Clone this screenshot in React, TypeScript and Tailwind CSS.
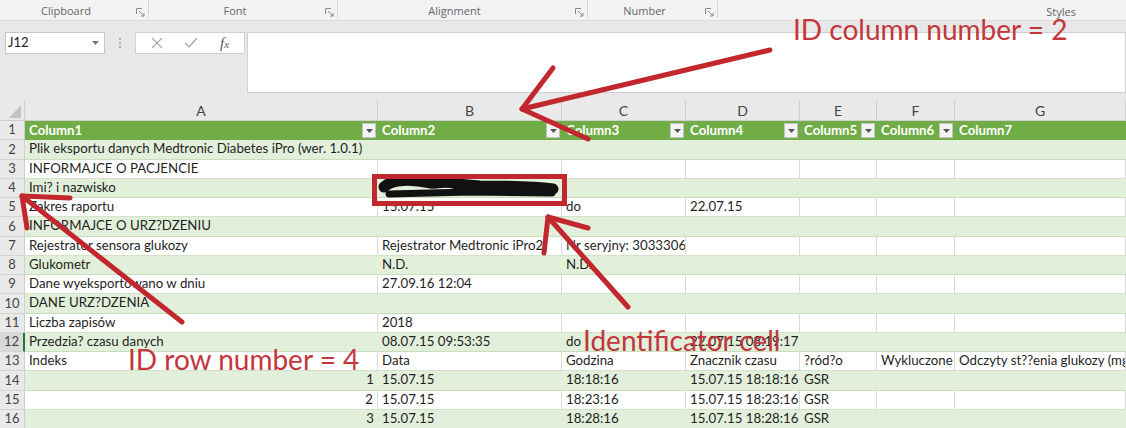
import React from "react";

const COLS = [
  { letter: "A", w: "w-[353px]" },
  { letter: "B", w: "w-[184px]" },
  { letter: "C", w: "w-[124px]" },
  { letter: "D", w: "w-[114px]" },
  { letter: "E", w: "w-[77px]" },
  { letter: "F", w: "w-[78px]" },
  { letter: "G", w: "flex-1" },
];

const GROUPS = [
  { label: "Clipboard", w: "w-[149px]" },
  { label: "Font", w: "w-[189px]" },
  { label: "Alignment", w: "w-[250px]" },
  { label: "Number", w: "w-[130px]" },
];

// row 2..16, seven columns
const DATA: string[][] = [
  ["Plik eksportu danych Medtronic Diabetes iPro (wer. 1.0.1)", "", "", "", "", "", ""],
  ["INFORMAJCE O PACJENCIE", "", "", "", "", "", ""],
  ["Imi? i nazwisko", "", "", "", "", "", ""],
  ["Zakres raportu", "15.07.15", "do", "22.07.15", "", "", ""],
  ["INFORMAJCE O URZ?DZENIU", "", "", "", "", "", ""],
  ["Rejestrator sensora glukozy", "Rejestrator Medtronic iPro2", "Nr seryjny: 3033306", "", "", "", ""],
  ["Glukometr", "N.D.", "N.D.", "", "", "", ""],
  ["Dane wyeksportowano w dniu", "27.09.16 12:04", "", "", "", "", ""],
  ["DANE URZ?DZENIA", "", "", "", "", "", ""],
  ["Liczba zapisów", "2018", "", "", "", "", ""],
  ["Przedzia? czasu danych", "08.07.15 09:53:35", "do", "22.07.15 08:19:17", "", "", ""],
  ["Indeks", "Data", "Godzina", "Znacznik czasu", "?ród?o", "Wykluczone", "Odczyty st??enia glukozy (mg/dL)"],
  ["1", "15.07.15", "18:18:16", "15.07.15 18:18:16", "GSR", "", ""],
  ["2", "15.07.15", "18:23:16", "15.07.15 18:23:16", "GSR", "", ""],
  ["3", "15.07.15", "18:28:16", "15.07.15 18:28:16", "GSR", "", ""],
];

function Launcher() {
  return (
    <svg width="9" height="9" viewBox="0 0 9 9" fill="none" stroke="#8a8a8a" strokeWidth="1">
      <path d="M0.5 6V0.5H6" />
      <path d="M3 3L8 8M8 5V8H5" />
    </svg>
  );
}

function FilterButton() {
  return (
    <div className="w-[14px] h-[15px] bg-[#f4f4f4] border border-[#c4c4c4] flex items-center justify-center">
      <svg width="7" height="4" viewBox="0 0 7 4">
        <path d="M0 0H7L3.5 4Z" fill="#555" />
      </svg>
    </div>
  );
}

export default function App() {
  return (
    <div className="relative w-[1126px] h-[428px] overflow-hidden bg-white font-['Lato',sans-serif]">
      {/* ribbon group labels */}
      <div className="h-[20px] flex bg-[#f3f3f3] font-['Open_Sans',sans-serif] text-[11px] text-[#666]">
        {GROUPS.map((g) => (
          <div key={g.label} className={`${g.w} flex items-center border-r border-[#d8d8d8] mb-[2px] pt-[4px]`}>
            <div className="flex-1 text-center">{g.label}</div>
            <div className="w-[16px] flex justify-center pt-[2px]">
              <Launcher />
            </div>
          </div>
        ))}
        <div className="flex-1 flex items-center justify-end pr-[50px] pt-[4px]">Styles</div>
      </div>

      {/* formula bar */}
      <div className="h-[80px] bg-[#e8e8e8] border-t border-[#dcdcdc] flex items-start pt-[11px] pl-[5px]">
        <div className="w-[100px] h-[22px] bg-white border border-[#c6c6c6] flex items-center justify-between pl-[2px] pr-[5px] text-[13px] text-[#222]">
          <span>J12</span>
          <svg width="7" height="4" viewBox="0 0 7 4">
            <path d="M0 0H7L3.5 4Z" fill="#777" />
          </svg>
        </div>
        <div className="w-[30px] h-[22px] flex flex-col items-center justify-center gap-[2px]">
          <div className="w-[2px] h-[2px] bg-[#b0b0b0]" />
          <div className="w-[2px] h-[2px] bg-[#b0b0b0]" />
          <div className="w-[2px] h-[2px] bg-[#b0b0b0]" />
        </div>
        <div className="w-[110px] h-[22px] bg-white border border-[#d0d0d0] flex items-center justify-around px-[4px]">
          <svg width="12" height="12" viewBox="0 0 12 12" stroke="#aaa" strokeWidth="1.2">
            <path d="M1 1L11 11M11 1L1 11" />
          </svg>
          <svg width="14" height="12" viewBox="0 0 14 12" fill="none" stroke="#aaa" strokeWidth="1.4">
            <path d="M1 6L5 10L13 1" />
          </svg>
          <span className="font-['Liberation_Serif',serif] italic text-[15px] text-[#555] leading-none">
            f<span className="text-[11px]">x</span>
          </span>
        </div>
        <div className="ml-[2px] flex-1 h-[61px] bg-white border border-[#d0d0d0]" />
      </div>

      {/* column headers */}
      <div className="h-[21px] flex bg-[#e9e9e9] border-b border-[#cfcfcf] text-[14px] text-[#444]">
        <div className="w-[25px] border-r border-[#cfcfcf] flex items-end justify-end pr-[3px] pb-[2px]">
          <svg width="12" height="13" viewBox="0 0 12 13">
            <path d="M12 0V13H0Z" fill="#c3c3c3" />
          </svg>
        </div>
        {COLS.map((c) => (
          <div key={c.letter} className={`${c.w} border-r border-[#cfcfcf] flex items-center justify-center`}>
            {c.letter}
          </div>
        ))}
      </div>

      {/* table header row 1 */}
      <div className="h-[19.25px] flex text-[13.25px]">
        <div className="w-[25px] bg-[#e9e9e9] border-r border-b border-[#cfcfcf] flex items-center justify-center text-[#444] text-[13px]">
          1
        </div>
        {COLS.map((c, i) => (
          <div
            key={c.letter}
            className={`${c.w} bg-[#70ad47] flex items-center justify-between pl-[4px] pr-[2px] font-bold text-white`}
          >
            <span>Column{i + 1}</span>
            {i < 6 && <FilterButton />}
          </div>
        ))}
      </div>

      {/* data rows */}
      {DATA.map((row, r) => {
        const n = r + 2;
        const band = n % 2 === 0;
        return (
          <div key={n} className="h-[19.25px] flex text-[13.25px] text-[#1f1f1f]">
            <div
              className={`w-[25px] border-b border-[#d4d4d4] flex items-center justify-center text-[#444] text-[13px] ${
                n === 12 ? "bg-[#d9d9d9] border-r-2 border-r-[#217346]" : "bg-[#e9e9e9] border-r border-r-[#cfcfcf]"
              }`}
            >
              {n}
            </div>
            {COLS.map((c, i) => (
              <div
                key={c.letter}
                className={`${c.w} flex items-center px-[4px] whitespace-nowrap overflow-hidden border-b ${
                  band ? "bg-[#e2efda] border-[#c9dfbb]" : "bg-white border-[#d3e3c8] border-r border-r-[#dadada]"
                } ${i === 0 && n >= 14 ? "justify-end" : ""}`}
              >
                {row[i]}
              </div>
            ))}
          </div>
        );
      })}

      {/* annotations */}
      <svg
        className="absolute inset-0 pointer-events-none"
        width="1126"
        height="428"
        viewBox="0 0 1126 428"
        fill="none"
        strokeLinecap="round"
        strokeLinejoin="round"
      >
        <path d="M384,187 C392,179 412,179 430,183 C440,184 446,180 456,184 L480,186 C505,186 530,186 553,189" stroke="#111" strokeWidth="11" />
        <path d="M389,194 L430,193 L470,192 L552,193" stroke="#111" strokeWidth="7" />
        <rect x="374.5" y="176.5" width="190" height="27" stroke="#c1272d" strokeWidth="5" strokeLinejoin="miter" />
        <g stroke="#c1272d" strokeWidth="5">
          <path d="M770,50 L522,109" />
          <path d="M553,68 L522,109 L588,139" />
          <path d="M548,217 L628,307" />
          <path d="M588,228 L548,217 L544,253" />
          <path d="M22,196 L182,322" />
          <path d="M70,198 L22,196 L27,228" />
        </g>
      </svg>
      <div className="absolute left-[793px] top-[15px] leading-none text-[28px] text-[#c3363c] whitespace-nowrap">
        ID column number = 2
      </div>
      <div className="absolute left-[128px] top-[345px] leading-none text-[28px] text-[#c3363c] whitespace-nowrap">
        ID row number = 4
      </div>
      <div className="absolute left-[583px] top-[326px] leading-none text-[28px] text-[#c3363c] whitespace-nowrap">
        Identificator cell
      </div>
    </div>
  );
}
